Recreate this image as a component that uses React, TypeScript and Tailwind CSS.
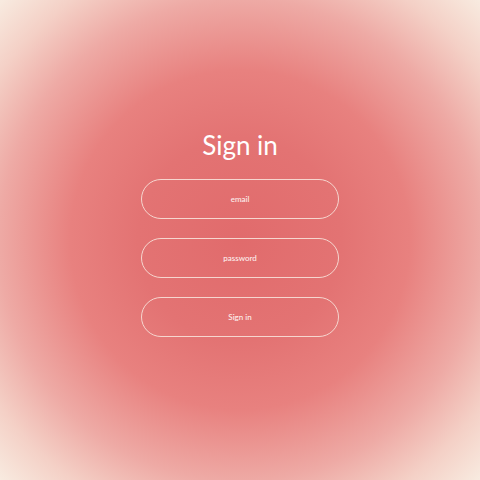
export default function App() {
  const field =
    "w-[198px] h-[40px] rounded-full border border-[#f6d6cf] bg-transparent text-center text-[8px] font-medium font-['Lato',sans-serif] outline-none";
  return (
    <div className="relative w-[480px] h-[480px] flex flex-col items-center pt-[128px] text-white bg-[radial-gradient(circle_at_center,#e16b6c_0%,#e37373_30%,#e8817f_50%,#eeaaa5_71%,#f4d0c6_86%,#f8ebe0_100%)]">
      <h1 className="text-[26px] leading-[34px] font-['Lato',sans-serif]">Sign in</h1>
      <div className="flex flex-col gap-[19px] mt-[17px]">
        <input placeholder="email" className={field + " placeholder:text-[#fdf0ee]"} />
        <input type="password" placeholder="password" className={field + " placeholder:text-[#fdf0ee]"} />
        <button className={field + " text-[#fdf0ee]"}>Sign in</button>
      </div>
    </div>
  );
}
